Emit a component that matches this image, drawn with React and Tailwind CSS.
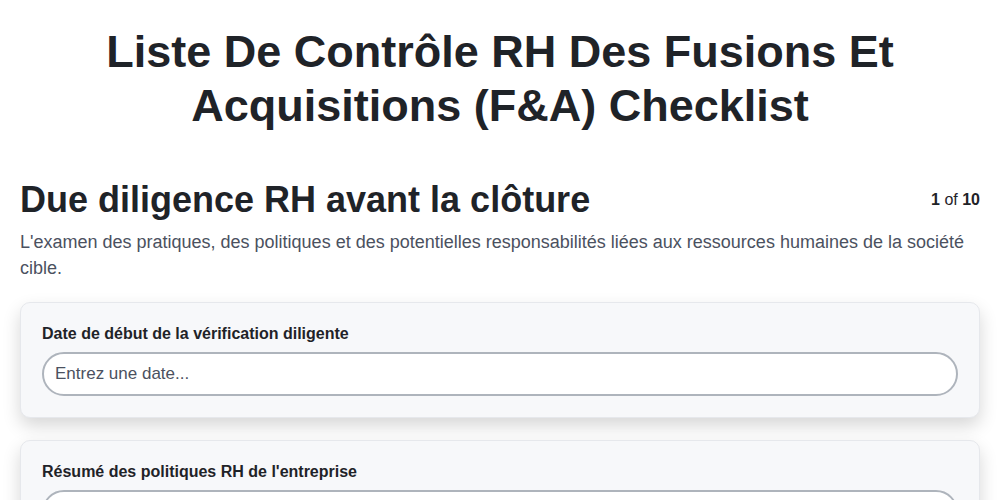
import React, { useState } from 'react';

function Field({ label, placeholder }) {
  const [value, setValue] = useState('');
  return (
    <div className="bg-[#f7f8fa] border border-[#e6e8ec] rounded-[10px] shadow-[0_8px_18px_rgba(0,0,0,0.16)] px-[21px] pt-[21px] pb-[21px]">
      <label className="block text-[16px] leading-[20px] font-bold text-[#1f2328] mb-[8px]">{label}</label>
      <input
        type="text"
        value={value}
        onChange={(e) => setValue(e.target.value)}
        placeholder={placeholder}
        className="w-full h-[44px] px-[11px] rounded-[22px] border-2 border-[#aeb4bc] bg-white text-[17px] text-[#1f2328] placeholder:text-[#4b5160] outline-none"
      />
    </div>
  );
}

export default function App() {
  return (
    <div className="min-h-screen bg-white font-['Liberation_Sans',Arial,sans-serif] text-[#1f2328]">
      <h1 className="pt-[25px] px-[20px] text-center text-[45px] leading-[1.2] font-bold">
        Liste De Contrôle RH Des Fusions Et
        <br />
        Acquisitions (F&amp;A) Checklist
      </h1>

      <div className="px-[20px] pt-[45px]">
        <div className="flex items-start justify-between">
          <h2 className="text-[36px] leading-[1.2] font-bold">Due diligence RH avant la clôture</h2>
          <div className="text-[16px] pt-[10px]">
            <span className="font-bold">1</span> of <span className="font-bold">10</span>
          </div>
        </div>
        <p className="mt-[8px] text-[18px] leading-[26px] text-[#4b5160]">
          L'examen des pratiques, des politiques et des potentielles responsabilités liées aux ressources humaines de la société cible.
        </p>

        <div className="mt-[21px] flex flex-col gap-[22px] pb-[30px]">
          <Field label="Date de début de la vérification diligente" placeholder="Entrez une date..." />
          <Field label="Résumé des politiques RH de l'entreprise" placeholder="" />
        </div>
      </div>
    </div>
  );
}
